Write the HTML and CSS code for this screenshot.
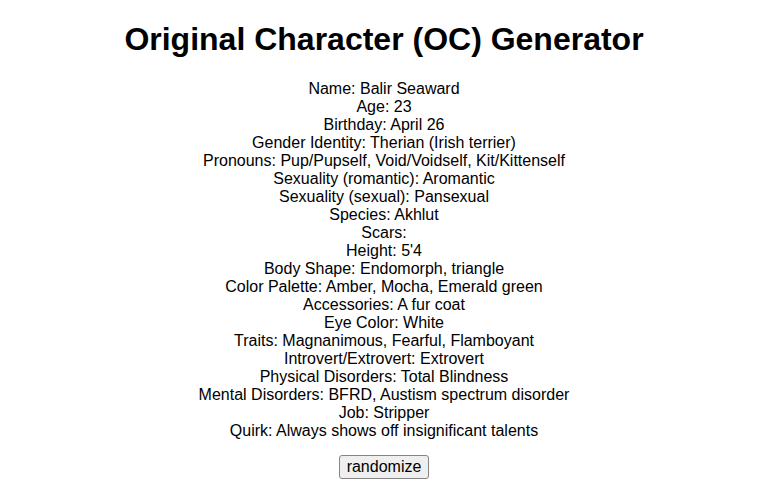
FILE: index.html
```html
<!DOCTYPE html>
<html>
<head>
<meta charset="utf-8">
<title>OC Generator</title>
<link rel="stylesheet" href="styles.css">
</head>
<body>
<div class="app">
  <h1 class="title">Original Character (OC) Generator</h1>
  <div class="traits">
    <div>Name: Balir Seaward</div>
    <div>Age: 23</div>
    <div>Birthday: April 26</div>
    <div>Gender Identity: Therian (Irish terrier)</div>
    <div>Pronouns: Pup/Pupself, Void/Voidself, Kit/Kittenself</div>
    <div>Sexuality (romantic): Aromantic</div>
    <div>Sexuality (sexual): Pansexual</div>
    <div>Species: Akhlut</div>
    <div>Scars: </div>
    <div>Height: 5'4</div>
    <div>Body Shape: Endomorph, triangle</div>
    <div>Color Palette: Amber, Mocha, Emerald green</div>
    <div>Accessories: A fur coat</div>
    <div>Eye Color: White</div>
    <div>Traits: Magnanimous, Fearful, Flamboyant</div>
    <div>Introvert/Extrovert: Extrovert</div>
    <div>Physical Disorders: Total Blindness</div>
    <div>Mental Disorders: BFRD, Austism spectrum disorder</div>
    <div>Job: Stripper</div>
    <div>Quirk: Always shows off insignificant talents</div>
  </div>
  <button class="btn">randomize</button>
</div>
</body>
</html>
```
FILE: styles.css
```css
html, body {
  margin: 0;
  padding: 0;
  background: #ffffff;
}
.app {
  font-family: "Liberation Sans", Arial, sans-serif;
  font-size: 16px;
  color: #000;
  text-align: center;
  display: flex;
  flex-direction: column;
  align-items: center;
  padding-top: 21px;
}
.title {
  font-size: 32px;
  font-weight: bold;
  line-height: 37px;
  margin: 0 0 22px 0;
}
.traits {
  line-height: 18px;
  min-height: 18px;
}
.traits div {
  height: 18px;
}
.btn {
  margin-top: 15px;
  font-family: "Liberation Sans", Arial, sans-serif;
  font-size: 16px;
  line-height: 18px;
  padding: 2px 7px;
  background: #efefef;
  border: 1px solid #858585;
  border-radius: 3px;
  color: #000;
}
```
